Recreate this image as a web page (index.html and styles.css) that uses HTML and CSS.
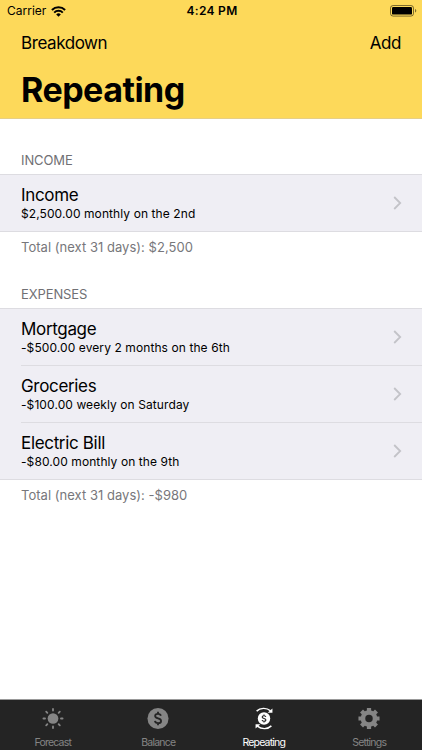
FILE: index.html
```html
<!DOCTYPE html>
<html lang="en">
  <head>
    <meta charset="UTF-8">
    <meta name="viewport" content="width=device-width, initial-scale=1.0">
    <title>Repeating</title>
    <link rel="stylesheet" href="styles.css">
  </head>
  <body>
    <header class="header">
      <div class="statusBar">
        <div class="carrier">
          <span>Carrier</span>
          <svg class="wifi" viewBox="0 0 15 11" width="15" height="11">
            <g fill="none" stroke="#000" stroke-width="2">
              <path d="M0.900 4a9.400 9.400 0 0 1 13.200 0"/>
              <path d="M3.200 6.600a6.100 6.100 0 0 1 8.600 0"/>
            </g>
            <path d="M5.200 8.400a3.300 3.300 0 0 1 4.600 0L7.500 10.700z"/>
          </svg>
        </div>
        <div class="clock">4:24 PM</div>
        <svg class="battery" viewBox="0 0 27 12" width="27" height="12">
          <rect x="0.5" y="0.5" width="23" height="10.6" rx="2.6" fill="none" stroke="#000" stroke-opacity="0.5"/>
          <rect x="2" y="2" width="20" height="7.6" rx="1.2"/>
          <path d="M25 4v3.600c.8-.3 1.300-1 1.300-1.800S25.800 4.300 25 4z" fill-opacity="0.5"/>
        </svg>
      </div>
      <nav class="navBar">
        <a class="navLink">Breakdown</a>
        <a class="navLink">Add</a>
      </nav>
      <h1 class="title">Repeating</h1>
    </header>

    <main class="content">
      <section class="section">
        <h2 class="sectionTitle">INCOME</h2>
        <ul class="list">
          <li class="row">
            <div class="rowBody">
              <div class="text">
                <div class="name">Income</div>
                <div class="detail">$2,500.00 monthly on the 2nd</div>
              </div>
              <svg class="chevron" viewBox="0 0 9 14" width="9" height="14"><path d="M1.200 1l6 6-6 6"/></svg>
            </div>
          </li>
        </ul>
        <p class="total">Total (next 31 days): $2,500</p>
      </section>

      <section class="section">
        <h2 class="sectionTitle">EXPENSES</h2>
        <ul class="list">
          <li class="row">
            <div class="rowBody">
              <div class="text">
                <div class="name">Mortgage</div>
                <div class="detail">-$500.00 every 2 months on the 6th</div>
              </div>
              <svg class="chevron" viewBox="0 0 9 14" width="9" height="14"><path d="M1.200 1l6 6-6 6"/></svg>
            </div>
          </li>
          <li class="row">
            <div class="rowBody">
              <div class="text">
                <div class="name">Groceries</div>
                <div class="detail">-$100.00 weekly on Saturday</div>
              </div>
              <svg class="chevron" viewBox="0 0 9 14" width="9" height="14"><path d="M1.200 1l6 6-6 6"/></svg>
            </div>
          </li>
          <li class="row">
            <div class="rowBody">
              <div class="text">
                <div class="name">Electric Bill</div>
                <div class="detail">-$80.00 monthly on the 9th</div>
              </div>
              <svg class="chevron" viewBox="0 0 9 14" width="9" height="14"><path d="M1.200 1l6 6-6 6"/></svg>
            </div>
          </li>
        </ul>
        <p class="total">Total (next 31 days): -$980</p>
      </section>
    </main>

    <nav class="tabBar">
      <a class="tab">
        <svg viewBox="0 0 24 24" width="24" height="24">
          <circle cx="12" cy="12" r="5.600" fill="currentColor"/>
          <g stroke="currentColor" stroke-width="1.900" stroke-linecap="round">
            <path d="M12 2v1.700M12 20.300v1.700M2 12h1.700M20.300 12h1.700M4.900 4.900l1.200 1.200M17.900 17.900l1.200 1.200M4.900 19.100l1.200-1.200M17.900 6.100l1.200-1.200"/>
          </g>
        </svg>
        <span>Forecast</span>
      </a>
      <a class="tab">
        <svg viewBox="0 0 24 24" width="24" height="24">
          <circle cx="12" cy="12" r="11" fill="currentColor"/>
          <path d="M15 9.200C14.700 7.900 13.600 7.200 12 7.200c-1.800 0-3 .9-3 2.300 0 3.300 6.200 1.600 6.200 5 0 1.500-1.400 2.400-3.200 2.400s-3-.8-3.200-2.300M12 5v2.400M12 16.600V19" fill="none" stroke="#242424" stroke-width="1.900"/>
        </svg>
        <span>Balance</span>
      </a>
      <a class="tab active">
        <svg viewBox="0 0 24 24" width="24" height="24">
          <circle cx="12" cy="12" r="6.500" fill="currentColor"/>
          <path d="M13.900 10.300c-.2-.8-.9-1.200-1.900-1.200-1.100 0-1.900.5-1.900 1.400 0 1.900 3.900 1 3.900 3 0 .9-.9 1.400-2 1.400s-1.900-.5-2-1.300M12 7.700v1.600M12 14.700v1.600" fill="none" stroke="#242424" stroke-width="1.200"/>
          <g fill="none" stroke="currentColor" stroke-width="1.500">
            <path d="M4.300 4.300C8 .7 14.500.4 18.900 4"/>
            <path d="M19.700 19.700c-3.700 3.600-10.200 3.900-14.600.3"/>
          </g>
          <path d="M20.800 1.500v4.600h-5zM3.200 22.500v-4.600h5z" fill="currentColor"/>
        </svg>
        <span>Repeating</span>
      </a>
      <a class="tab">
        <svg viewBox="0 0 24 24" width="24" height="24">
          <g fill="none" stroke="currentColor">
            <circle cx="12" cy="12" r="6.300" stroke-width="4.800"/>
            <path d="M12 1v4M12 19v4M1 12h4M19 12h4M4.200 4.200l2.800 2.800M17 17l2.800 2.800M4.200 19.800L7 17M17 7l2.800-2.800" stroke-width="4.400"/>
          </g>
        </svg>
        <span>Settings</span>
      </a>
    </nav>
  </body>
</html>
```
FILE: styles.css
```css
* {
  box-sizing: border-box;
}
html, body {
  height: 100%;
}
body {
  margin: 0;
  display: flex;
  flex-direction: column;
  overflow: hidden;
  background: #fff;
  color: #000;
  font-family: Inter, "Liberation Sans", sans-serif;
}

.header {
  height: 119px;
  background: #fdd95a;
  border-bottom: 1px solid #e6cf87;
}
.statusBar {
  height: 22px;
  padding: 0 5px 0 7px;
  display: grid;
  grid-template-columns: 1fr auto 1fr;
  align-items: center;
  font-size: 12px;
  line-height: 22px;
}
.carrier {
  display: flex;
  align-items: center;
  gap: 5px;
}
.clock {
  font-weight: 600;
  letter-spacing: 0.3px;
}
.battery {
  justify-self: end;
}
.navBar {
  height: 42px;
  padding: 0 21px;
  display: flex;
  justify-content: space-between;
  align-items: center;
  font-size: 17px;
  letter-spacing: -0.43px;
}
.title {
  margin: 0;
  padding-left: 21px;
  font-size: 34px;
  font-weight: 700;
  line-height: 52px;
  letter-spacing: -0.5px;
}

.content {
  flex: 1;
  padding-top: 28px;
}
.section {
  height: 134px;
}
.sectionTitle {
  margin: 0;
  padding-left: 21px;
  height: 27px;
  font-size: 13px;
  font-weight: 400;
  line-height: 27px;
  letter-spacing: -0.1px;
  color: #707074;
}
.list {
  margin: 0;
  padding: 0;
  list-style: none;
  background: #efeef4;
  border-top: 1px solid #dddce1;
  border-bottom: 1px solid #dddce1;
}
.row {
  padding-left: 21px;
}
.rowBody {
  height: 57px;
  padding-right: 20px;
  display: flex;
  justify-content: space-between;
  align-items: center;
  border-bottom: 1px solid #dddce1;
}
.row:last-child .rowBody {
  height: 56px;
  border-bottom: none;
}
.name {
  padding-top: 1px;
  font-size: 17px;
  line-height: 21px;
  letter-spacing: -0.33px;
}
.detail {
  font-size: 12px;
  line-height: 16px;
  letter-spacing: 0.09px;
}
.chevron {
  fill: none;
  stroke: #c3c3c8;
  stroke-width: 1.8;
}
.total {
  margin: 0;
  padding-left: 21px;
  font-size: 13px;
  line-height: 31px;
  letter-spacing: 0.03px;
  color: #77777b;
}

.tabBar {
  height: 51px;
  padding-top: 7px;
  display: flex;
  background: #242424;
  border-top: 1px solid #999;
}
.tab {
  flex: 1;
  display: flex;
  flex-direction: column;
  align-items: center;
  gap: 5px;
  color: #858585;
  font-size: 10.5px;
  line-height: 15px;
  letter-spacing: -0.8px;
}
.tab.active {
  color: #fff;
}
```
